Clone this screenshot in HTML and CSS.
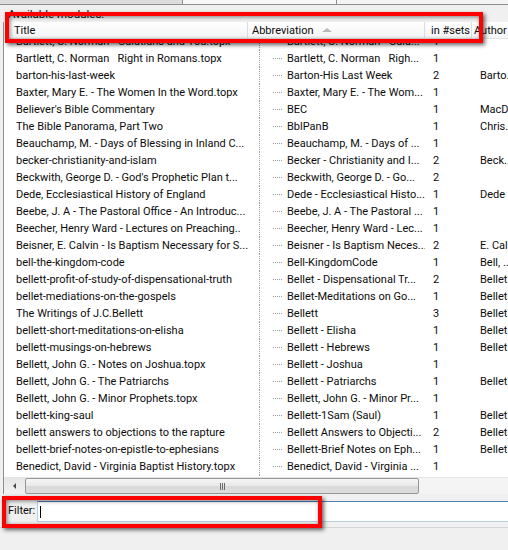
FILE: index.html
```html
<!DOCTYPE html>
<html>
<head>
<meta charset="utf-8">
<link rel="stylesheet" href="styles.css">
</head>
<body>
<div class="dialog">
  <div class="tabs"><div class="seg s1"></div><div class="seg s2"></div><div class="seg s3"></div></div>
  <div class="label">Available modules:</div>
  <div class="grid">
    <div class="head">
      <div class="hc h-title">Title</div>
      <div class="hc h-abbr">Abbreviation<span class="sort"></span></div>
      <div class="hc h-sets">in #sets</div>
      <div class="hc h-auth">Author</div>
    </div>
    <div class="body">
      <div class="rows">
        <div class="row"><span class="c-title">Bartlett, C. Norman - Galatians and You.topx</span><span class="c-abbr">Bartlett, C. Norman - Gala...</span><span class="c-sets">1</span><span class="c-auth"></span></div>
        <div class="row"><span class="c-title">Bartlett, C. Norman &nbsp; Right in Romans.topx</span><span class="c-abbr">Bartlett, C. Norman &nbsp; Righ...</span><span class="c-sets">1</span><span class="c-auth"></span></div>
        <div class="row"><span class="c-title">barton-his-last-week</span><span class="c-abbr">Barton-His Last Week</span><span class="c-sets">2</span><span class="c-auth">Barto...</span></div>
        <div class="row"><span class="c-title">Baxter, Mary E. - The Women In the Word.topx</span><span class="c-abbr">Baxter, Mary E. - The Wom...</span><span class="c-sets">1</span><span class="c-auth"></span></div>
        <div class="row"><span class="c-title">Believer's Bible Commentary</span><span class="c-abbr">BEC</span><span class="c-sets">1</span><span class="c-auth">MacD</span></div>
        <div class="row"><span class="c-title">The Bible Panorama, Part Two</span><span class="c-abbr">BblPanB</span><span class="c-sets">1</span><span class="c-auth">Chris.</span></div>
        <div class="row"><span class="c-title">Beauchamp, M. - Days of Blessing in Inland C...</span><span class="c-abbr">Beauchamp, M. - Days of ...</span><span class="c-sets">1</span><span class="c-auth"></span></div>
        <div class="row"><span class="c-title">becker-christianity-and-islam</span><span class="c-abbr">Becker - Christianity and I...</span><span class="c-sets">2</span><span class="c-auth">Beck..</span></div>
        <div class="row"><span class="c-title">Beckwith, George D. - God's Prophetic Plan t...</span><span class="c-abbr">Beckwith, George D. - Go...</span><span class="c-sets">2</span><span class="c-auth"></span></div>
        <div class="row"><span class="c-title">Dede, Ecclesiastical History of England</span><span class="c-abbr">Dede - Ecclesiastical Histo...</span><span class="c-sets">1</span><span class="c-auth">Dede</span></div>
        <div class="row"><span class="c-title">Beebe, J. A - The Pastoral Office - An Introduc...</span><span class="c-abbr">Beebe, J. A - The Pastoral ...</span><span class="c-sets">1</span><span class="c-auth"></span></div>
        <div class="row"><span class="c-title">Beecher, Henry Ward - Lectures on Preaching..</span><span class="c-abbr">Beecher, Henry Ward - Lec...</span><span class="c-sets">1</span><span class="c-auth"></span></div>
        <div class="row"><span class="c-title">Beisner, E. Calvin - Is Baptism Necessary for S...</span><span class="c-abbr">Beisner - Is Baptism Neces...</span><span class="c-sets">2</span><span class="c-auth">E. Cal.</span></div>
        <div class="row"><span class="c-title">bell-the-kingdom-code</span><span class="c-abbr">Bell-KingdomCode</span><span class="c-sets">1</span><span class="c-auth">Bell, ..</span></div>
        <div class="row"><span class="c-title">bellett-profit-of-study-of-dispensational-truth</span><span class="c-abbr">Bellet - Dispensational Tr...</span><span class="c-sets">2</span><span class="c-auth">Bellet</span></div>
        <div class="row"><span class="c-title">bellet-mediations-on-the-gospels</span><span class="c-abbr">Bellet-Meditations on Go...</span><span class="c-sets">1</span><span class="c-auth">Bellet</span></div>
        <div class="row"><span class="c-title">The Writings of J.C.Bellett</span><span class="c-abbr">Bellett</span><span class="c-sets">3</span><span class="c-auth">Bellet</span></div>
        <div class="row"><span class="c-title">bellett-short-meditations-on-elisha</span><span class="c-abbr">Bellett - Elisha</span><span class="c-sets">1</span><span class="c-auth">Bellet</span></div>
        <div class="row"><span class="c-title">bellett-musings-on-hebrews</span><span class="c-abbr">Bellett - Hebrews</span><span class="c-sets">1</span><span class="c-auth">Bellet</span></div>
        <div class="row"><span class="c-title">Bellett, John G. - Notes on Joshua.topx</span><span class="c-abbr">Bellett - Joshua</span><span class="c-sets">1</span><span class="c-auth"></span></div>
        <div class="row"><span class="c-title">Bellett, John G. - The Patriarchs</span><span class="c-abbr">Bellett - Patriarchs</span><span class="c-sets">1</span><span class="c-auth">Bellet</span></div>
        <div class="row"><span class="c-title">Bellett, John G. - Minor Prophets.topx</span><span class="c-abbr">Bellett, John G. - Minor Pr...</span><span class="c-sets">1</span><span class="c-auth"></span></div>
        <div class="row"><span class="c-title">bellett-king-saul</span><span class="c-abbr">Bellett-1Sam (Saul)</span><span class="c-sets">1</span><span class="c-auth">Bellet</span></div>
        <div class="row"><span class="c-title">bellett answers to objections to the rapture</span><span class="c-abbr">Bellett Answers to Objecti...</span><span class="c-sets">2</span><span class="c-auth">Bellet</span></div>
        <div class="row"><span class="c-title">bellett-brief-notes-on-epistle-to-ephesians</span><span class="c-abbr">Bellett-Brief Notes on Eph...</span><span class="c-sets">1</span><span class="c-auth">Bellet</span></div>
        <div class="row"><span class="c-title">Benedict, David - Virginia Baptist History.topx</span><span class="c-abbr">Benedict, David - Virginia ...</span><span class="c-sets">1</span><span class="c-auth"></span></div>
        <div class="row"><span class="c-title">Bennett, Richard A. - Your Good For Satan</span><span class="c-abbr">Bennett - Good For Satan</span><span class="c-sets">2</span><span class="c-auth">Benn</span></div>
      </div>
    </div>
    <div class="hscroll">
      <div class="arrow"><span class="tri"></span></div>
      <div class="thumb"><span class="grip"></span></div>
      <div class="track"></div>
    </div>
  </div>
  <div class="filter">
    <span class="flabel">Filter:</span>
    <div class="input"><span class="caret"></span></div>
  </div>
  <div class="mark m1"></div>
  <div class="mark m2"></div>
</div>
</body>
</html>
```

FILE: styles.css
```css
html, body {
  margin: 0;
  padding: 0;
}
body {
  width: 508px;
  height: 550px;
  overflow: hidden;
  background: #f0f0f0;
  font-family: Roboto, "Liberation Sans", sans-serif;
  font-size: 11px;
  color: #0c0c0c;
}
.dialog {
  position: relative;
  width: 508px;
  height: 550px;
  overflow: hidden;
}
.tabs {
  display: flex;
  height: 5px;
}
.seg {
  height: 4px;
  border-bottom: 1px solid #8e8e8e;
}
.s1 {
  width: 182px;
  background: #dcdcdc;
  border-right: 1px solid #8e8e8e;
}
.s2 {
  width: 153px;
  background: #f7f7f7;
  border-right: 1px solid #8e8e8e;
}
.s3 {
  flex: 1;
  background: #f4f4f4;
}
.label {
  height: 17px;
  line-height: 19px;
  padding-left: 8px;
  font-size: 11.5px;
  overflow: hidden;
}
.grid {
  margin-left: 3px;
  border-left: 1px solid #8f9090;
  background: #fff;
}
.head {
  display: grid;
  grid-template-columns: 244px 177px 47px 1fr;
  height: 17px;
  background: linear-gradient(#ffffff, #f3f4f5);
  border-bottom: 1px solid #e2e3e4;
  box-sizing: border-box;
  font-size: 11px;
}
.hc {
  line-height: 17px;
  white-space: nowrap;
  overflow: hidden;
  border-right: 1px solid #dcdcdc;
}
.h-title { padding-left: 10px; }
.h-abbr { padding-left: 4px; }
.h-sets { padding-left: 6px; }
.h-auth { padding-left: 2px; border-right: 0; }
.sort {
  display: inline-block;
  width: 0;
  height: 0;
  margin-left: 8px;
  vertical-align: 2px;
  border-left: 5px solid transparent;
  border-right: 5px solid transparent;
  border-bottom: 4px solid #b9b9b9;
}
.body {
  height: 438px;
  overflow: hidden;
}
.rows {
  margin-top: -6px;
}
.row {
  display: grid;
  grid-template-columns: 244px 177px 47px 1fr;
  height: 17px;
  line-height: 17px;
  white-space: nowrap;
}
.row span {
  overflow: hidden;
}
.c-title { padding-left: 12px; }
.c-abbr {
  padding-left: 39px;
  background-image:
    repeating-linear-gradient(to bottom, #9a9a9a 0 1px, transparent 1px 2px),
    repeating-linear-gradient(to right, #9a9a9a 0 1px, transparent 1px 2px);
  background-size: 1px 17px, 9px 1px;
  background-position: 11px 0, 25px 8px;
  background-repeat: no-repeat;
}
.c-sets { padding-left: 8px; }
.c-auth { padding-left: 8px; }
.hscroll {
  display: flex;
  height: 17px;
  background: linear-gradient(#e6e6e6, #f2f2f2);
  border-top: 1px solid #e4e4e4;
  box-sizing: border-box;
}
.arrow {
  width: 21px;
  display: flex;
  align-items: center;
  justify-content: center;
}
.tri {
  width: 0;
  height: 0;
  border-top: 3px solid transparent;
  border-bottom: 3px solid transparent;
  border-right: 3px solid #4a4a4a;
}
.thumb {
  width: 392px;
  height: 14px;
  border: 1px solid #979797;
  border-radius: 2px;
  background: linear-gradient(#f6f6f6, #e8e8e8 50%, #dadada 51%, #dcdcdc);
  display: flex;
  align-items: center;
  justify-content: center;
}
.grip {
  width: 5px;
  height: 7px;
  background: repeating-linear-gradient(to right, #6a6a6a 0 1px, transparent 1px 2px);
}
.track {
  flex: 1;
  background: #f4f4f4;
}
.filter {
  display: flex;
  align-items: center;
  height: 34px;
  box-sizing: border-box;
  border-bottom: 1px solid #d7d7d7;
}
.flabel {
  padding-left: 8px;
  width: 29px;
  font-size: 11px;
}
.input {
  flex: 1;
  height: 21px;
  margin-top: 2px;
  box-sizing: border-box;
  background: #fff;
  border: 1px solid #b7d0e8;
  border-top-color: #4d7fb3;
  border-right: 0;
  display: flex;
  align-items: center;
}
.caret {
  width: 1px;
  height: 12px;
  margin-left: 2px;
  background: #000;
}
.mark {
  position: absolute;
  border: 4px solid #f00;
  box-sizing: border-box;
  box-shadow: 2px 2px 4px rgba(0, 0, 0, 0.6), inset 1px 1px 4px rgba(0, 0, 0, 0.5);
}
.m1 {
  left: 5px;
  top: 12px;
  width: 478px;
  height: 31px;
}
.m2 {
  left: 2px;
  top: 496px;
  width: 320px;
  height: 32px;
}
```
